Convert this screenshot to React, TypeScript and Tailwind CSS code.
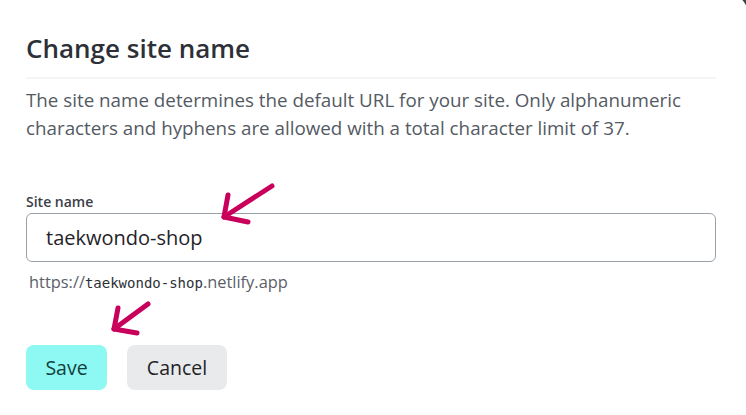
import React from 'react';

// Hand-drawn pointer arrows laid over the form
const Arrows = () => (
  <svg className="pointer-events-none absolute inset-0" width="746" height="415" viewBox="0 0 746 415">
    <g stroke="#c8005c" strokeWidth="5" strokeLinecap="round" strokeLinejoin="round" fill="none">
      <path d="M272 186 L224 217" />
      <path d="M228 195 L224 217 L248 222" />
      <path d="M148 304 L114 329" />
      <path d="M118 308 L114 329 L137 333" />
    </g>
  </svg>
);

export default function App() {
  return (
    <div className="relative h-[415px] w-[746px] overflow-hidden bg-[#3a444c]" style={{ fontFamily: '"Open Sans", sans-serif' }}>
      <div className="-mt-[6px] h-[440px] w-[748px] rounded-tr-[20px] bg-white pl-[26px] pr-[36px] pt-[6px]">
        <h2 className="pt-[30px] text-[26px] font-semibold leading-[36px] text-[#2d3137]">Change site name</h2>
        <div className="mt-[11px] h-[2px] w-[690px] bg-[#f3f4f6]" />

        <p className="mt-[7px] text-[18.8px] leading-[28px] text-[#545a63]">
          The site name determines the default URL for your site. Only alphanumeric
          <br />
          characters and hyphens are allowed with a total character limit of 37.
        </p>

        <label className="mt-[50px] block text-[14px] font-semibold leading-[20px] text-[#3b4048]">Site name</label>
        <div className="mt-[1px] flex h-[49px] w-[690px] items-center rounded-[6px] border border-[#9aa1ab] pl-[19px] text-[20px] font-medium text-[#1f2328]">
          taekwondo-shop
        </div>
        <div className="ml-[3px] mt-[9px] text-[16.4px] leading-[22px] text-[#5b6068]">
          https://<span className="text-[14px] text-[#2d3137]" style={{ fontFamily: '"DejaVu Sans Mono", monospace' }}>taekwondo-shop</span>.netlify.app
        </div>

        <div className="mt-[51px] flex gap-[20px]">
          <button className="flex h-[45px] w-[81px] items-center justify-center rounded-[8px] bg-[#8ef9f3] text-[19.5px] font-medium text-[#12403d]">Save</button>
          <button className="flex h-[45px] w-[100px] items-center justify-center rounded-[8px] bg-[#e9eaec] text-[19.5px] font-medium text-[#1f2328]">Cancel</button>
        </div>
      </div>
      <Arrows />
    </div>
  );
}
